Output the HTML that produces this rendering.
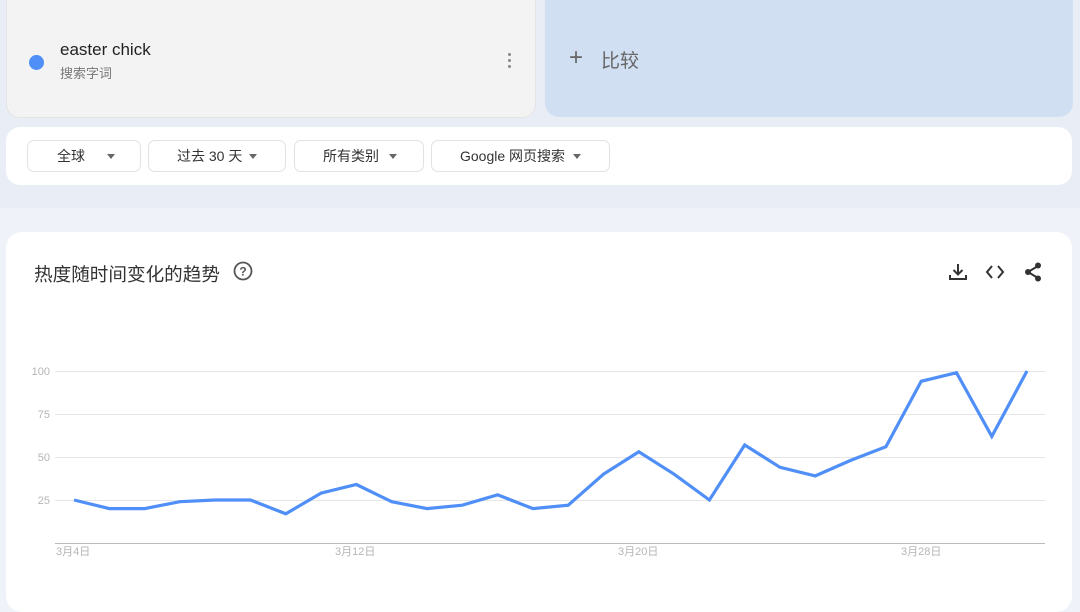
<!DOCTYPE html>
<html><head><meta charset="utf-8"><style>
*{margin:0;padding:0;box-sizing:border-box}
body{width:1080px;height:590px;overflow:hidden;background:#eff3f9;font-family:"Liberation Sans","Noto Sans CJK SC",sans-serif;position:relative}
.top{position:absolute;left:0;top:0;width:1080px;height:208px;background:#e8edf6}
.term{position:absolute;left:6px;top:-12px;width:530px;height:130px;background:#f3f3f3;border-radius:14px;border:1px solid #e4e4e4}
.cmp{position:absolute;left:545px;top:-12px;width:528px;height:129px;background:#d0dff2;border-radius:14px}
.flt{position:absolute;left:6px;top:127px;width:1066px;height:58px;background:#fff;border-radius:14px}
.btn{position:absolute;top:13px;height:32px;border:1px solid #e2e2e2;border-radius:7px;font-size:14px;color:#333;line-height:30px}
.tri{position:absolute;top:13px;width:0;height:0;border-left:4.5px solid transparent;border-right:4.5px solid transparent;border-top:5px solid #666}
.chart{position:absolute;left:6px;top:232px;width:1066px;height:380px;background:#fff;border-radius:16px}
</style></head><body>
<div class="top"></div>
<div class="term">
 <div style="position:absolute;left:22px;top:66px;width:15px;height:15px;border-radius:50%;background:#4f8ff7"></div>
 <div style="position:absolute;left:53px;top:51px;font-size:17px;color:#222">easter chick</div>
 <div style="position:absolute;left:53px;top:74px;font-size:13px;color:#777">搜索字词</div>
 <div style="position:absolute;left:501px;top:64px;width:4px;height:16px">
  <div style="width:3px;height:3px;border-radius:50%;background:#888;margin-bottom:3px"></div>
  <div style="width:3px;height:3px;border-radius:50%;background:#888;margin-bottom:3px"></div>
  <div style="width:3px;height:3px;border-radius:50%;background:#888"></div></div>
</div>
<div class="cmp">
 <div style="position:absolute;left:24px;top:56px;font-size:24px;color:#666;font-weight:300">+</div>
 <div style="position:absolute;left:56px;top:58px;font-size:19px;color:#666">比较</div>
</div>
<div class="flt">
 <div class="btn" style="left:21px;width:114px"><span style="position:absolute;left:29px">全球</span><div class="tri" style="left:79px"></div></div>
 <div class="btn" style="left:142px;width:138px"><span style="position:absolute;left:28px">过去 30 天</span><div class="tri" style="left:100px"></div></div>
 <div class="btn" style="left:288px;width:130px"><span style="position:absolute;left:28px">所有类别</span><div class="tri" style="left:94px"></div></div>
 <div class="btn" style="left:425px;width:179px"><span style="position:absolute;left:28px">Google 网页搜索</span><div class="tri" style="left:141px"></div></div>
</div>
<div class="chart">
 <div style="position:absolute;left:28px;top:28px;font-size:18.6px;color:#333">热度随时间变化的趋势</div>
 <svg style="position:absolute;left:226px;top:28px" width="22" height="22" viewBox="0 0 22 22"><circle cx="11" cy="11" r="8.5" fill="none" stroke="#555" stroke-width="1.8"/><text x="11" y="15.5" font-size="12" text-anchor="middle" fill="#555" font-family="Liberation Sans" font-weight="bold">?</text></svg>
 <svg style="position:absolute;left:940px;top:28px" width="110" height="24" viewBox="0 0 110 24">
  <g stroke="#333" stroke-width="2" fill="none">
   <path d="M12 4v10M7.5 10l4.5 4.5 4.5-4.5M4 15v4h16v-4"/>
   <path d="M46 6l-5 6 5 6M52 6l5 6-5 6"/>
   <path d="M82 12l10-6M82 12l10 6"/>
  </g>
  <circle cx="82" cy="12" r="3" fill="#333"/><circle cx="92" cy="5.5" r="3" fill="#333"/><circle cx="92" cy="18.5" r="3" fill="#333"/>
 </svg>
</div>
<svg style="position:absolute;left:0;top:0" width="1080" height="590">
 <g stroke="#e6e6e6" stroke-width="1">
  <line x1="55" y1="371.5" x2="1045" y2="371.5"/><line x1="55" y1="414.5" x2="1045" y2="414.5"/>
  <line x1="55" y1="457.5" x2="1045" y2="457.5"/><line x1="55" y1="500.5" x2="1045" y2="500.5"/>
 </g>
 <line x1="55" y1="543.5" x2="1045" y2="543.5" stroke="#bbb" stroke-width="1"/>
 <g font-size="11" fill="#b5b5b5" font-family="Liberation Sans,Noto Sans CJK SC,sans-serif">
  <text x="50" y="375" text-anchor="end">100</text><text x="50" y="418" text-anchor="end">75</text>
  <text x="50" y="461" text-anchor="end">50</text><text x="50" y="504" text-anchor="end">25</text>
  <text x="56" y="555">3月4日</text><text x="335" y="555">3月12日</text><text x="618" y="555">3月20日</text><text x="901" y="555">3月28日</text>
 </g>
 <polyline fill="none" stroke="#4f8ff7" stroke-width="3.2" stroke-linejoin="miter" points="74,500 109.3,508.6 144.6,508.6 179.9,501.7 215.2,500 250.5,500 285.8,513.8 321.1,493.1 356.4,484.5 391.7,501.7 427,508.6 462.3,505.2 497.6,494.8 532.9,508.6 568.2,505.2 603.5,474.2 638.8,451.8 674.1,474.2 709.4,500 744.7,445 780,467.3 815.3,475.9 850.6,460.4 885.9,446.7 921.2,381.3 956.5,372.7 991.8,436.4 1027,371"/>
</svg>
</body></html>
